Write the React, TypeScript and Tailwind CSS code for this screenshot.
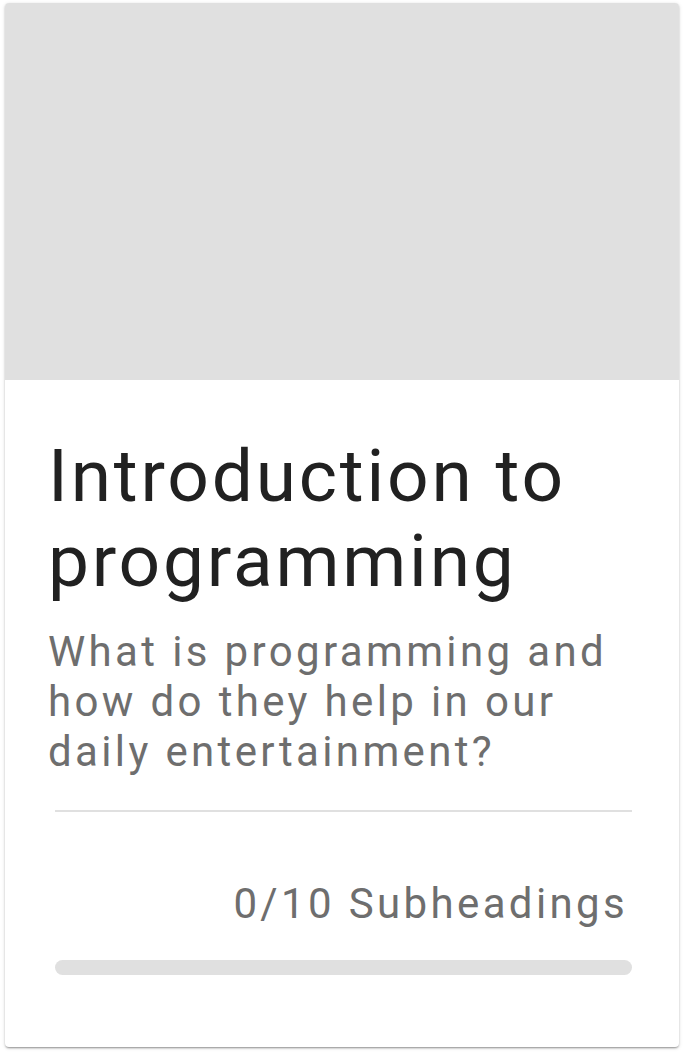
export default function App() {
  return (
    <div className="min-h-screen bg-white pl-[5px] pt-[3px]" style={{ fontFamily: "Roboto, 'Liberation Sans', sans-serif" }}>
      <div className="w-[674px] h-[1044px] overflow-hidden rounded bg-white shadow-[0_2px_2px_-1px_rgba(0,0,0,0.25),0_1px_2px_0_rgba(0,0,0,0.16),0_1px_4px_0_rgba(0,0,0,0.12)]">
        <div className="h-[377px] bg-[#e0e0e0]" />
        <div className="pl-[43px] pr-[47px] pt-[54px]">
          <h2 className="text-[73px] leading-[85px] tracking-[2.8px] font-normal text-[#212121]">
            Introduction to programming
          </h2>
          <p className="mt-[23px] text-[42px] leading-[50px] tracking-[0.08em] text-[#6e6e6e]">
            What is programming and how do they help in our daily entertainment?
          </p>
          <div className="mt-[33px] ml-[7px] h-[2px] bg-[#e0e0e0]" />
          <div className="mt-[67px] pr-[4px] text-right text-[42px] leading-[50px] tracking-[0.08em] text-[#6e6e6e]">
            0/10 Subheadings
          </div>
          <div className="mt-[31px] ml-[7px] h-[15px] rounded-full bg-[#e0e0e0]" />
        </div>
      </div>
    </div>
  );
}
